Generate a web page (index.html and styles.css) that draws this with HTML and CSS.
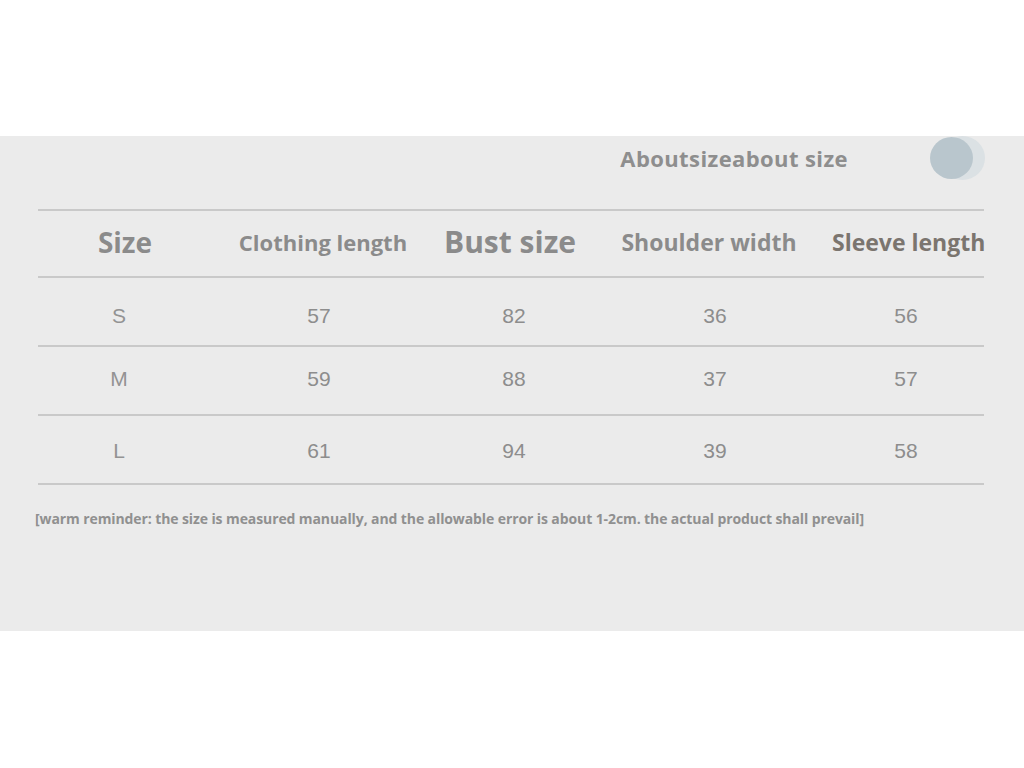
FILE: index.html
```html
<!DOCTYPE html>
<html lang="en">
<head>
<meta charset="utf-8">
<title>About size</title>
<link rel="stylesheet" href="styles.css">
</head>
<body>
<section class="panel">
  <div class="title-row">
    <h2 class="title">Aboutsizeabout size</h2>
    <div class="dots">
      <span class="dot dot-back"></span>
      <span class="dot dot-front"></span>
    </div>
  </div>
  <div class="table">
    <div class="row head">
      <div class="c c1 h-size">Size</div>
      <div class="c c2 h-clothing">Clothing length</div>
      <div class="c c3 h-big">Bust size</div>
      <div class="c c4 h-wide">Shoulder width</div>
      <div class="c c5 h-wide h-dark">Sleeve length</div>
    </div>
    <div class="row data r1">
      <div class="c d1 letter">S</div>
      <div class="c d2">57</div>
      <div class="c d3">82</div>
      <div class="c d4">36</div>
      <div class="c d5">56</div>
    </div>
    <div class="row data r2">
      <div class="c d1 letter">M</div>
      <div class="c d2">59</div>
      <div class="c d3">88</div>
      <div class="c d4">37</div>
      <div class="c d5">57</div>
    </div>
    <div class="row data r3">
      <div class="c d1 letter">L</div>
      <div class="c d2">61</div>
      <div class="c d3">94</div>
      <div class="c d4">39</div>
      <div class="c d5">58</div>
    </div>
  </div>
  <p class="note">[warm reminder: the size is measured manually, and the allowable error is about 1-2cm. the actual product shall prevail]</p>
</section>
</body>
</html>
```
FILE: styles.css
```css
html, body {
  margin: 0;
  padding: 0;
  background: #ffffff;
}
body {
  font-family: "Open Sans", "Noto Sans", sans-serif;
}
.panel {
  margin-top: 136px;
  height: 495px;
  background: #ebebeb;
  box-sizing: border-box;
}
.title-row {
  height: 73px;
  display: flex;
  align-items: flex-start;
  justify-content: flex-end;
  padding-right: 40px;
  gap: 82px;
}
.title {
  margin: 7px 0 0 0;
  font-size: 22px;
  font-weight: 700;
  color: #8e8e8e;
  line-height: 30px;
  letter-spacing: 0.4px;
}
.dots {
  position: relative;
  width: 54px;
  height: 44px;
}
.dot {
  position: absolute;
  border-radius: 50%;
}
.dot-back {
  left: 10px;
  top: 0;
  width: 45px;
  height: 44px;
  background: #dbe1e4;
}
.dot-front {
  left: 0;
  top: 1px;
  width: 43px;
  height: 42px;
  background: #b9c6cd;
}
.table {
  margin-left: 38px;
  width: 946px;
  border-top: 2px solid #c9c9c9;
}
.row {
  display: grid;
  grid-template-columns: 174px 222px 152px 246px 148px 4px;
  align-items: center;
  border-bottom: 2px solid #c9c9c9;
  box-sizing: border-box;
}
.row.head {
  height: 67px;
}
.row.data {
  height: 69px;
}
.c {
  text-align: center;
  white-space: nowrap;
}
.head .c {
  font-weight: 700;
  color: #8b8b8b;
  padding-bottom: 4px;
}
.h-size {
  font-size: 28px;
}
.h-big {
  font-size: 30px;
}
.h-clothing {
  font-size: 22px;
}
.h-wide {
  font-size: 23px;
}
.h-dark {
  color: #7b756f !important;
}
.data .c {
  font-family: "Liberation Sans", Arial, sans-serif;
  font-size: 21px;
  color: #8d8d8d;
}
.r1 .c { padding-top: 8px; }
.r2 .c { padding-bottom: 4px; }
.r3 .c { padding-top: 2px; }
.data .letter {
  color: #939393;
}
.d1 { padding-right: 12px; }
.d2 { padding-right: 8px; }
.d3 { padding-left: 8px; }
.d4 { padding-left: 12px; }
.note {
  margin: 24px 0 0 35px;
  font-size: 14px;
  font-weight: 700;
  color: #909090;
  line-height: 20px;
  letter-spacing: -0.1px;
}
```
